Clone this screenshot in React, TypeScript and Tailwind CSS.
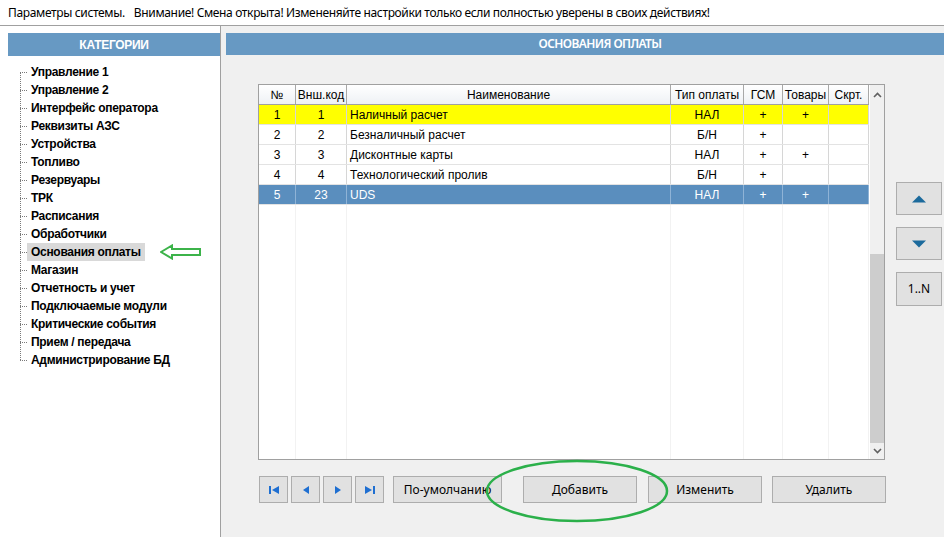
import React from "react";

const cats = [
  "Управление 1",
  "Управление 2",
  "Интерфейс оператора",
  "Реквизиты АЗС",
  "Устройства",
  "Топливо",
  "Резервуары",
  "ТРК",
  "Расписания",
  "Обработчики",
  "Основания оплаты",
  "Магазин",
  "Отчетность и учет",
  "Подключаемые модули",
  "Критические события",
  "Прием / передача",
  "Администрирование БД",
];

const cols = [
  { w: 37, t: "№", al: "center" },
  { w: 51, t: "Внш.код", al: "center" },
  { w: 324, t: "Наименование", al: "left" },
  { w: 73, t: "Тип оплаты", al: "center" },
  { w: 39, t: "ГСМ", al: "center" },
  { w: 46, t: "Товары", al: "center" },
  { w: 40, t: "Скрт.", al: "center" },
];

const rows = [
  { c: ["1", "1", "Наличный расчет", "НАЛ", "+", "+", ""], kind: "yellow" },
  { c: ["2", "2", "Безналичный расчет", "Б/Н", "+", "", ""], kind: "" },
  { c: ["3", "3", "Дисконтные карты", "НАЛ", "+", "+", ""], kind: "" },
  { c: ["4", "4", "Технологический пролив", "Б/Н", "+", "", ""], kind: "" },
  { c: ["5", "23", "UDS", "НАЛ", "+", "+", ""], kind: "sel" },
];

function NavIcon({ kind }: { kind: string }) {
  const fill = "#1f6fd1";
  return (
    <svg width="12" height="10" viewBox="0 0 12 10">
      {kind === "first" && (
        <>
          <rect x="1" y="1" width="2" height="8" fill={fill} />
          <polygon points="11,1 4,5 11,9" fill={fill} />
        </>
      )}
      {kind === "prev" && <polygon points="9,1 3,5 9,9" fill={fill} />}
      {kind === "next" && <polygon points="3,1 9,5 3,9" fill={fill} />}
      {kind === "last" && (
        <>
          <polygon points="1,1 8,5 1,9" fill={fill} />
          <rect x="9" y="1" width="2" height="8" fill={fill} />
        </>
      )}
    </svg>
  );
}

export default function App() {
  return (
    <div className="w-[951px] h-[537px] bg-white relative overflow-hidden font-['Liberation_Sans',Arial,sans-serif] text-black">
      {/* top line */}
      <div className="w-[944px] h-[26px] border-b border-[#a0a0a0] flex items-center pl-[8px] text-[12px] font-['Noto_Sans',sans-serif] tracking-[-0.35px] text-black">
        <span>Параметры системы.</span>
        <span className="ml-[9px]">
          Внимание! Смена открыта! Измененяйте настройки только если полностью уверены в своих действиях!
        </span>
      </div>
      <div className="flex w-[944px] h-[511px]">
        {/* left panel */}
        <div className="w-[221px] border-r border-[#a0a0a0] bg-white pt-[7px] pl-[8px]">
          <div className="h-[23px] bg-[#6799c3] text-white font-bold text-[12px] flex items-center justify-center tracking-[-0.3px]">
            КАТЕГОРИИ
          </div>
          <div className="relative mt-[7px] ml-[12px]">
            <div className="absolute left-0 top-[9px] h-[288px] border-l border-dotted border-[#7a7a7a]" />
            {cats.map((c) => {
              const sel = c === "Основания оплаты";
              return (
                <div key={c} className="flex items-center h-[18px]">
                  <div className="w-[7px] border-t border-dotted border-[#7a7a7a]" />
                  <span
                    className={`h-[18px] flex items-center px-[4px] text-[12px] font-bold whitespace-nowrap tracking-[-0.3px] ${
                      sel ? "bg-[#d9d9d9]" : ""
                    }`}
                  >
                    {c}
                  </span>
                  {sel && (
                    <svg width="42" height="16" viewBox="0 0 42 16" className="ml-[15px]">
                      <polygon
                        points="1,8 12,1.5 12,5 40,5 40,11 12,11 12,14.5"
                        fill="none"
                        stroke="#3cb34a"
                        strokeWidth="2"
                        strokeLinejoin="miter"
                      />
                    </svg>
                  )}
                </div>
              );
            })}
          </div>
        </div>
        {/* right panel */}
        <div className="flex-1 bg-[#f0f0f0] pt-[7px] pl-[5px] relative">
          <div className="h-[22px] bg-[#6799c3] text-white text-[12px] flex items-center justify-center pl-[30px] font-['Noto_Sans',sans-serif] font-semibold tracking-[-0.6px]">
            ОСНОВАНИЯ ОПЛАТЫ
          </div>
          <div className="flex mt-[29px] ml-[32px]">
            {/* table */}
            <div className="w-[627px] h-[376px] border border-[#a0a0a0] bg-white flex">
              <div className="w-[610px] flex flex-col text-[12px]">
                <div className="flex h-[20px] border-b border-[#a0a0a0] bg-gradient-to-b from-white to-[#eef1f5]">
                  {cols.map((c, i) => (
                    <div
                      key={i}
                      style={{ width: c.w }}
                      className="h-full flex items-center justify-center border-r border-[#a8a8a8] whitespace-nowrap"
                    >
                      {c.t}
                    </div>
                  ))}
                </div>
                {rows.map((r, ri) => (
                  <div
                    key={ri}
                    className={`flex h-[20px] border-b ${
                      r.kind === "yellow"
                        ? "bg-[#ffff00] border-[#e3e3e3]"
                        : r.kind === "sel"
                        ? "bg-[#5a8ebe] text-white border-[#e3e3e3]"
                        : "bg-white border-[#e3e3e3]"
                    }`}
                  >
                    {r.c.map((v, i) => (
                      <div
                        key={i}
                        style={{ width: cols[i].w }}
                        className={`h-full flex items-center border-r whitespace-nowrap ${
                          r.kind === "sel" ? "border-[#8fb3d6]" : "border-[#d6d6d6]"
                        } ${cols[i].al === "left" ? "justify-start pl-[3px]" : "justify-center"}`}
                      >
                        {v}
                      </div>
                    ))}
                  </div>
                ))}
                <div className="flex flex-1">
                  {cols.map((c, i) => (
                    <div key={i} style={{ width: c.w }} className="h-full border-r border-[#f2f2f2]" />
                  ))}
                </div>
              </div>
              {/* scrollbar */}
              <div className="w-[15px] border-l border-white bg-[#f0f0f0] flex flex-col">
                <div className="h-[20px] flex items-center justify-center">
                  <svg width="9" height="6" viewBox="0 0 9 6">
                    <polyline points="1,5 4.5,1.5 8,5" fill="none" stroke="#606060" strokeWidth="1.6" />
                  </svg>
                </div>
                <div className="h-[149px]" />
                <div className="h-[189px] bg-[#cdcdcd]" />
                <div className="flex-1 flex items-center justify-center">
                  <svg width="9" height="6" viewBox="0 0 9 6">
                    <polyline points="1,1 4.5,4.5 8,1" fill="none" stroke="#606060" strokeWidth="1.6" />
                  </svg>
                </div>
              </div>
            </div>
            {/* side buttons */}
            <div className="ml-[11px] mt-[98px] flex flex-col gap-[12px]">
              <div className="w-[46px] h-[33px] bg-[#e1e1e1] border border-[#adadad] flex items-center justify-center">
                <svg width="16" height="8" viewBox="0 0 16 8">
                  <polygon points="1,7.5 8,0.5 15,7.5" fill="#1c6a9c" />
                </svg>
              </div>
              <div className="w-[46px] h-[33px] bg-[#e1e1e1] border border-[#adadad] flex items-center justify-center">
                <svg width="16" height="8" viewBox="0 0 16 8">
                  <polygon points="1,0.5 15,0.5 8,7.5" fill="#1c6a9c" />
                </svg>
              </div>
              <div className="w-[46px] h-[34px] bg-[#e1e1e1] border border-[#adadad] flex items-center justify-center text-[12px] font-['Noto_Sans',sans-serif]">
                1..N
              </div>
            </div>
          </div>
          {/* bottom buttons */}
          <div className="flex items-center ml-[33px] mt-[16px] text-[12px] font-['Noto_Sans',sans-serif]">
            {["first", "prev", "next", "last"].map((k, i) => (
              <div
                key={k}
                className={`w-[29px] h-[27px] bg-[#e1e1e1] border border-[#adadad] flex items-center justify-center ${
                  i > 0 ? "ml-[3px]" : ""
                }`}
              >
                <NavIcon kind={k} />
              </div>
            ))}
            <div className="ml-[9px] w-[109px] h-[27px] bg-[#e1e1e1] border border-[#adadad] flex items-center justify-center whitespace-nowrap overflow-hidden">
              По-умолчанию
            </div>
            <div className="ml-[21px] w-[114px] h-[27px] bg-[#e1e1e1] border border-[#adadad] flex items-center justify-center">
              Добавить
            </div>
            <div className="ml-[11px] w-[114px] h-[27px] bg-[#e1e1e1] border border-[#adadad] flex items-center justify-center">
              Изменить
            </div>
            <div className="ml-[10px] w-[114px] h-[27px] bg-[#e1e1e1] border border-[#adadad] flex items-center justify-center">
              Удалить
            </div>
          </div>
        </div>
      </div>
      {/* annotation ellipse */}
      <svg className="absolute left-[484px] top-[458px] pointer-events-none" width="186" height="66" viewBox="0 0 186 66">
        <ellipse cx="93" cy="33" rx="90" ry="30" fill="none" stroke="#2bb04a" strokeWidth="2.5" />
      </svg>
    </div>
  );
}
